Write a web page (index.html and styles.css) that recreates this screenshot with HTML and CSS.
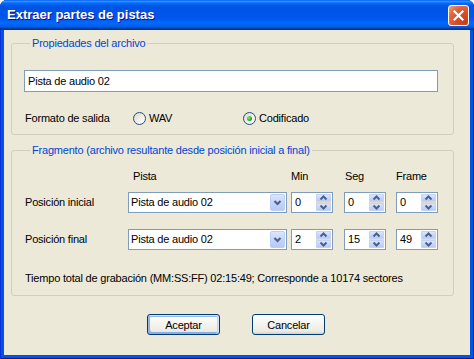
FILE: index.html
```html
<!DOCTYPE html>
<html lang="es">
<head>
<meta charset="utf-8">
<title>Extraer partes de pistas</title>
<link rel="stylesheet" href="styles.css">
</head>
<body>
<div class="window">
  <div class="titlebar">
    <span class="title">Extraer partes de pistas</span>
    <span class="close"><svg width="19" height="19" viewBox="0 0 19 19"><path d="M5.5 5.5 L13.5 13.5 M13.5 5.5 L5.5 13.5" stroke="#fff" stroke-width="2.2" stroke-linecap="square"/></svg></span>
  </div>
  <div class="client">
    <fieldset class="group group-props">
      <legend>Propiedades del archivo</legend>
      <div class="textbox">Pista de audio 02</div>
      <div class="radio-row">
        <span class="row-label">Formato de salida</span>
        <span class="radio radio-wav"><span class="radio-dot"></span>WAV</span>
        <span class="radio checked"><span class="radio-dot"></span>Codificado</span>
      </div>
    </fieldset>
    <fieldset class="group group-frag">
      <legend>Fragmento (archivo resultante desde posición inicial a final)</legend>
      <div class="grid">
        <span></span>
        <span class="hdr hdr-pista">Pista</span>
        <span class="hdr">Min</span>
        <span class="hdr hdr-seg">Seg</span>
        <span class="hdr">Frame</span>

        <span class="row-label field-label">Posición inicial</span>
        <div class="combo"><span class="combo-text">Pista de audio 02</span><span class="combo-btn"><svg width="13" height="15" viewBox="0 0 13 15"><path d="M3.5 6 L6.5 9 L9.5 6" stroke="#4D6185" stroke-width="2" fill="none"/></svg></span></div>
        <div class="spin"><span class="spin-val">0</span><span class="spin-btns"><span class="spin-up"><svg width="13" height="6" viewBox="0 0 13 6"><path d="M3.5 4.5 L6.5 1.5 L9.5 4.5" stroke="#4D6185" stroke-width="2" fill="none"/></svg></span><span class="spin-down"><svg width="13" height="6" viewBox="0 0 13 6"><path d="M3.5 1.5 L6.5 4.5 L9.5 1.5" stroke="#4D6185" stroke-width="2" fill="none"/></svg></span></span></div>
        <div class="spin"><span class="spin-val">0</span><span class="spin-btns"><span class="spin-up"><svg width="13" height="6" viewBox="0 0 13 6"><path d="M3.5 4.5 L6.5 1.5 L9.5 4.5" stroke="#4D6185" stroke-width="2" fill="none"/></svg></span><span class="spin-down"><svg width="13" height="6" viewBox="0 0 13 6"><path d="M3.5 1.5 L6.5 4.5 L9.5 1.5" stroke="#4D6185" stroke-width="2" fill="none"/></svg></span></span></div>
        <div class="spin"><span class="spin-val">0</span><span class="spin-btns"><span class="spin-up"><svg width="13" height="6" viewBox="0 0 13 6"><path d="M3.5 4.5 L6.5 1.5 L9.5 4.5" stroke="#4D6185" stroke-width="2" fill="none"/></svg></span><span class="spin-down"><svg width="13" height="6" viewBox="0 0 13 6"><path d="M3.5 1.5 L6.5 4.5 L9.5 1.5" stroke="#4D6185" stroke-width="2" fill="none"/></svg></span></span></div>

        <span class="row-label field-label">Posición final</span>
        <div class="combo"><span class="combo-text">Pista de audio 02</span><span class="combo-btn"><svg width="13" height="15" viewBox="0 0 13 15"><path d="M3.5 6 L6.5 9 L9.5 6" stroke="#4D6185" stroke-width="2" fill="none"/></svg></span></div>
        <div class="spin"><span class="spin-val">2</span><span class="spin-btns"><span class="spin-up"><svg width="13" height="6" viewBox="0 0 13 6"><path d="M3.5 4.5 L6.5 1.5 L9.5 4.5" stroke="#4D6185" stroke-width="2" fill="none"/></svg></span><span class="spin-down"><svg width="13" height="6" viewBox="0 0 13 6"><path d="M3.5 1.5 L6.5 4.5 L9.5 1.5" stroke="#4D6185" stroke-width="2" fill="none"/></svg></span></span></div>
        <div class="spin"><span class="spin-val">15</span><span class="spin-btns"><span class="spin-up"><svg width="13" height="6" viewBox="0 0 13 6"><path d="M3.5 4.5 L6.5 1.5 L9.5 4.5" stroke="#4D6185" stroke-width="2" fill="none"/></svg></span><span class="spin-down"><svg width="13" height="6" viewBox="0 0 13 6"><path d="M3.5 1.5 L6.5 4.5 L9.5 1.5" stroke="#4D6185" stroke-width="2" fill="none"/></svg></span></span></div>
        <div class="spin"><span class="spin-val">49</span><span class="spin-btns"><span class="spin-up"><svg width="13" height="6" viewBox="0 0 13 6"><path d="M3.5 4.5 L6.5 1.5 L9.5 4.5" stroke="#4D6185" stroke-width="2" fill="none"/></svg></span><span class="spin-down"><svg width="13" height="6" viewBox="0 0 13 6"><path d="M3.5 1.5 L6.5 4.5 L9.5 1.5" stroke="#4D6185" stroke-width="2" fill="none"/></svg></span></span></div>
      </div>
      <div class="status">Tiempo total de grabación (MM:SS:FF) 02:15:49; Corresponde a 10174 sectores</div>
    </fieldset>
    <div class="buttons">
      <button class="btn btn-default" type="button">Aceptar</button>
      <button class="btn" type="button">Cancelar</button>
    </div>
  </div>
</div>
</body>
</html>
```
FILE: styles.css
```css
* { box-sizing: border-box; }
body {
  margin: 0;
  background: #ffffff;
  font-family: "Liberation Sans", Arial, sans-serif;
  font-size: 11px;
  letter-spacing: -0.2px;
  color: #000;
}
.window {
  width: 474px;
  height: 359px;
  display: flex;
  flex-direction: column;
  background: #0054E3;
  border-radius: 7px 7px 0 0;
  box-shadow: inset 1px 0 0 #0831D9, inset -1px 0 0 #001EA0, inset 0 -1px 0 #001C8C;
  overflow: hidden;
}
.titlebar {
  height: 30px;
  flex: none;
  display: flex;
  align-items: flex-start;
  padding: 0 5px 0 7px;
  background: linear-gradient(to bottom, #0058EE 0%, #3593FF 4%, #288EFF 6%, #127DFF 8%, #036FFC 10%, #0262EE 14%, #0057E5 20%, #0054E3 24%, #0055EB 56%, #005BF5 66%, #026AFE 76%, #0062EF 86%, #0052D6 92%, #0040AB 94%, #003092 100%);
}
.title {
  margin-top: 7px;
  color: #fff;
  font-weight: bold;
  font-size: 13px;
  line-height: 16px;
  letter-spacing: 0;
  text-shadow: 1px 1px #0F1089;
}
.close {
  margin-left: auto;
  margin-top: 5px;
  width: 21px;
  height: 21px;
  border: 1px solid #fff;
  border-radius: 3px;
  display: flex;
  align-items: center;
  justify-content: center;
  background: radial-gradient(circle at 85% 85%, #C73F17 0%, #D9512B 45%, #E5663F 70%, #F5A58A 100%);
}
.client {
  flex: 1;
  margin: 0 4px 4px 4px;
  background: #ECE9D8;
  padding: 7px 7px 0 7px;
  display: flex;
  flex-direction: column;
}
.group {
  margin: 0;
  width: 443px;
  min-width: 0;
  border: 1px solid #D0D0BF;
  border-radius: 3px;
}
.group legend {
  margin-left: 6px;
  padding: 0 2px;
  color: #0046D5;
  line-height: 13px;
}
.group-props {
  padding: 20px 15px 8px 12px;
}
.textbox {
  height: 22px;
  border: 1px solid #7F9DB9;
  background: #fff;
  padding-left: 3px;
  line-height: 20px;
}
.radio-row {
  margin-top: 18px;
  height: 16px;
  display: flex;
  align-items: center;
}
.radio-row .row-label {
  width: 109px;
  padding-left: 1px;
}
.radio {
  display: flex;
  align-items: center;
  gap: 3px;
}
.radio-wav { width: 110px; }
.radio-dot {
  width: 13px;
  height: 13px;
  border: 1px solid #1C5180;
  border-radius: 50%;
  background: linear-gradient(135deg, #DCD7CB 0%, #F4F3EE 60%, #ffffff 100%);
  display: flex;
  align-items: center;
  justify-content: center;
}
.radio.checked .radio-dot::after {
  content: "";
  width: 5px;
  height: 5px;
  border-radius: 50%;
  background: radial-gradient(circle at 35% 35%, #8EE588 0%, #2DB02A 55%, #0E8A0E 100%);
}
.group-frag {
  margin-top: 9px;
  padding: 12px 15px 10px 12px;
}
.grid {
  display: grid;
  grid-template-columns: 104px 163px 53px 52px 42px;
  grid-template-rows: 23px 37px 21px;
  align-items: start;
}
.hdr { line-height: 14px; }
.hdr-pista { padding-left: 5px; }
.hdr-seg { padding-left: 1px; }
.field-label {
  line-height: 21px;
  padding-left: 1px;
}
.combo {
  width: 159px;
  height: 21px;
  border: 1px solid #7F9DB9;
  background: #fff;
  display: flex;
}
.combo-text {
  flex: 1;
  padding-left: 2px;
  line-height: 19px;
}
.combo-btn {
  width: 15px;
  margin: 1px 1px 1px 0;
  border: 1px solid #BCCDF6;
  border-radius: 2px;
  background: linear-gradient(to bottom, #DCE6FE 0%, #C6D6FD 45%, #B6CAF7 100%);
  display: flex;
  align-items: center;
  justify-content: center;
}
.spin {
  width: 42px;
  height: 21px;
  border: 1px solid #7F9DB9;
  background: #fff;
  display: flex;
}
.spin-val {
  flex: 1;
  padding-left: 3px;
  line-height: 19px;
}
.spin-btns {
  width: 15px;
  margin: 1px 1px 1px 0;
  display: flex;
  flex-direction: column;
  gap: 1px;
  background: #E3DDC9;
}
.spin-up, .spin-down {
  flex: 1;
  border: 1px solid #C3D2F8;
  border-radius: 2px;
  background: linear-gradient(to bottom, #DCE6FE 0%, #C6D6FD 50%, #B8CBF7 100%);
  display: flex;
  align-items: center;
  justify-content: center;
}
.status {
  margin-top: 21px;
  line-height: 14px;
  padding-left: 1px;
}
.buttons {
  margin-top: 18px;
  padding-right: 2px;
  display: flex;
  justify-content: center;
  gap: 32px;
}
.btn {
  width: 73px;
  height: 21px;
  padding: 0;
  border: 1px solid #003C74;
  border-radius: 3px;
  background: linear-gradient(to bottom, #FFFFFF 0%, #F4F3EE 50%, #ECEBE6 85%, #D6D0C5 100%);
  font-family: inherit;
  font-size: 11px;
  letter-spacing: -0.2px;
  color: #000;
}
.btn-default {
  box-shadow: inset -1px 1px #CEE7FF, inset 1px 2px #98B8EA, inset -2px 0 #BCD4F6, inset 1px -1px #89ADE4, inset 2px -2px #89ADE4;
}
```
